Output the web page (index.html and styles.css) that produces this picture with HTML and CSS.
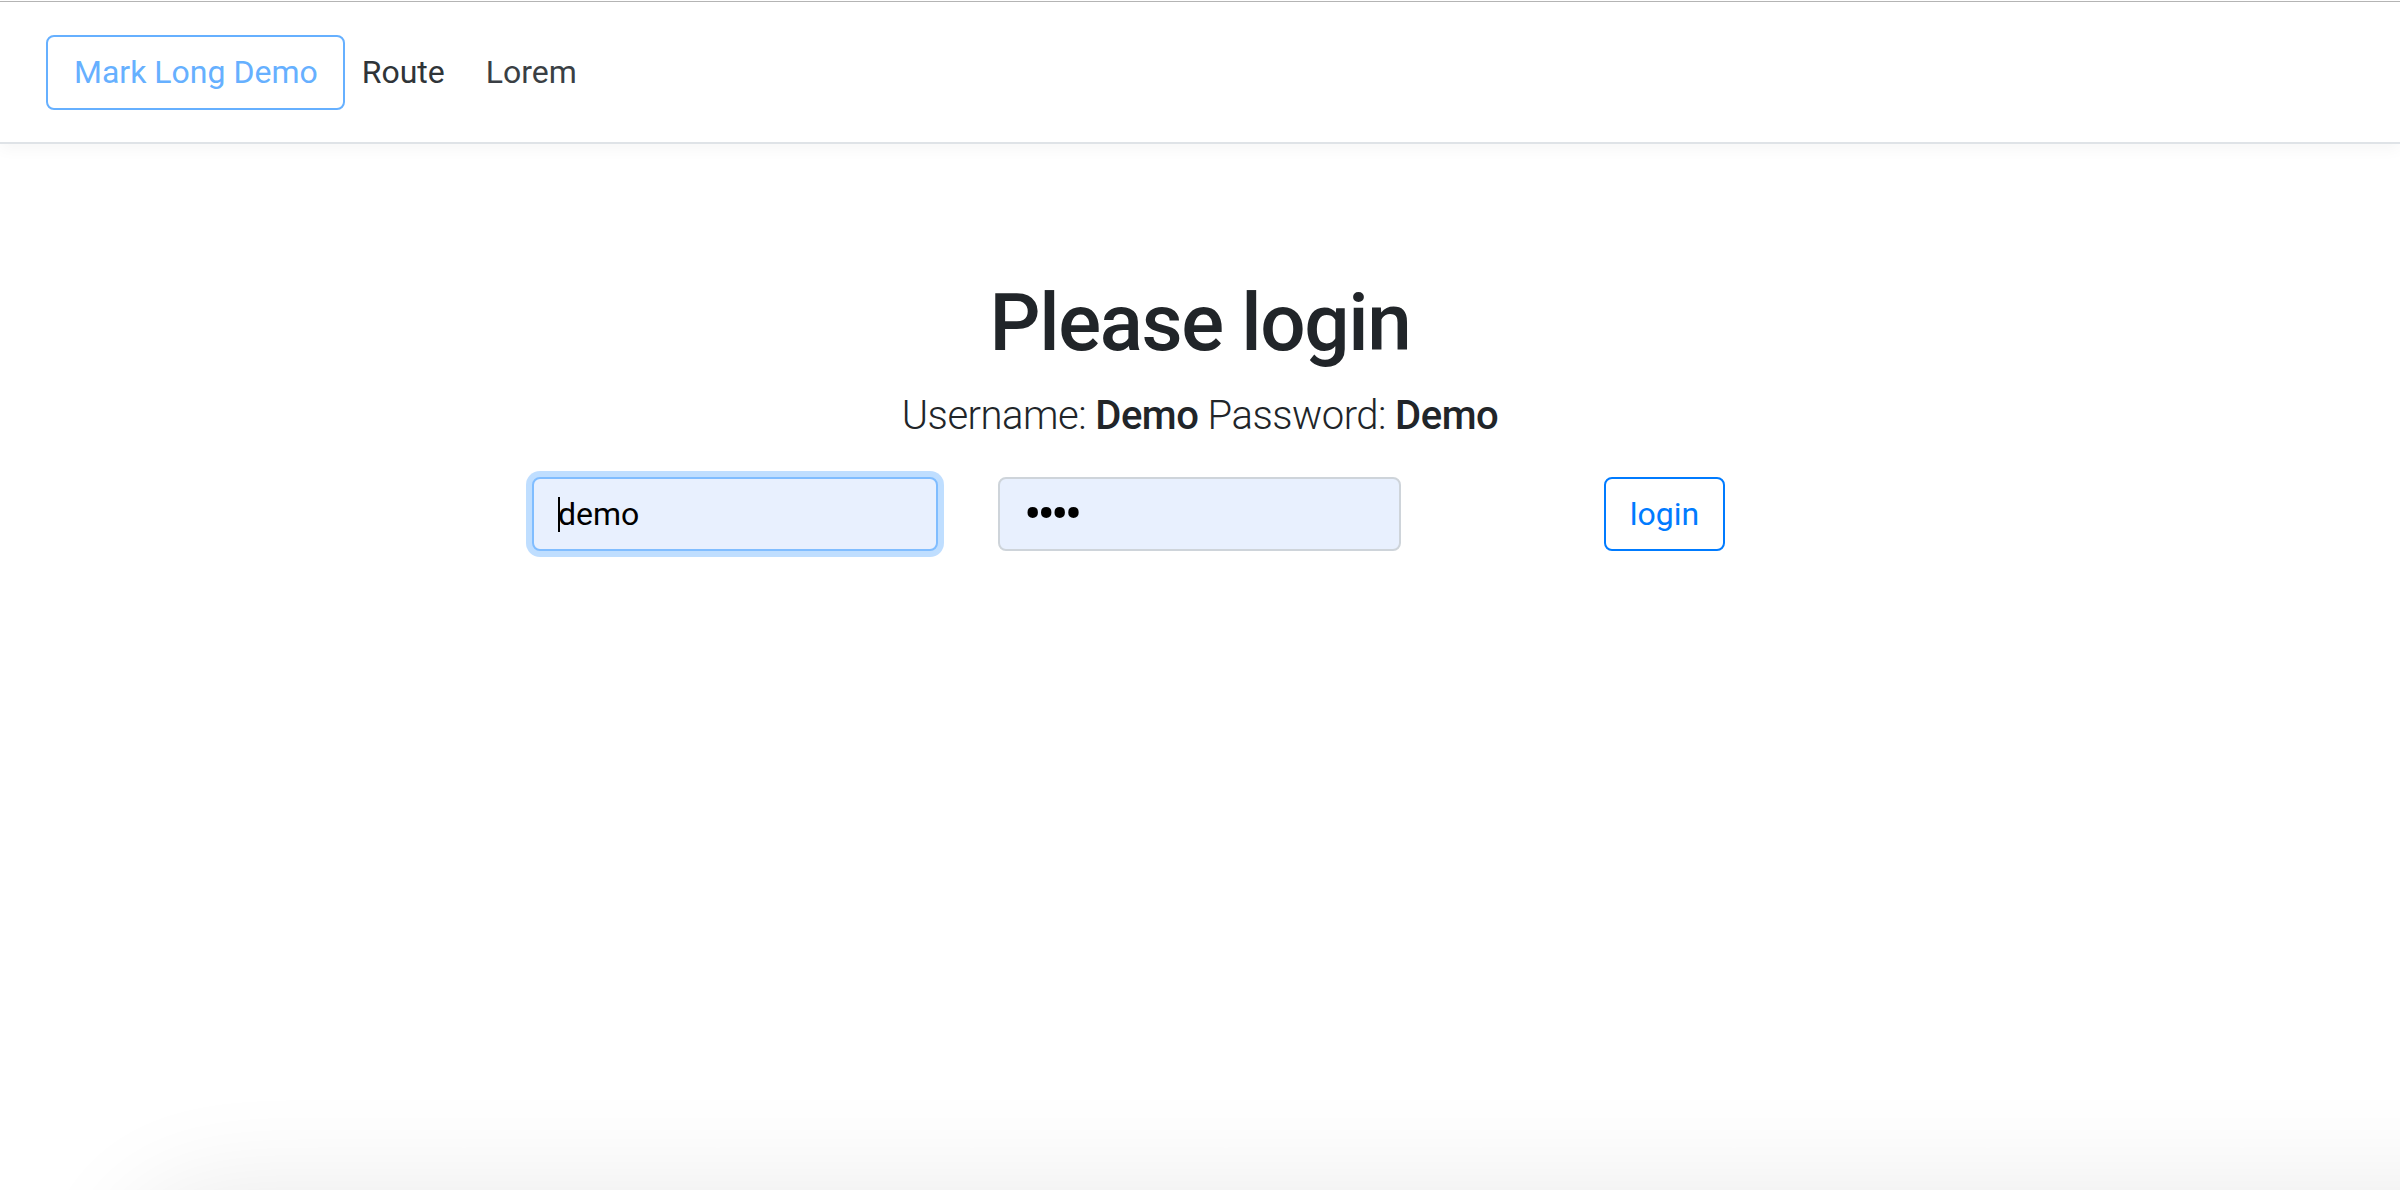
FILE: index.html
```html
<!DOCTYPE html>
<html lang="en">
<head>
<meta charset="utf-8">
<title>Mark Long Demo</title>
<link rel="stylesheet" href="styles.css">
</head>
<body>
<nav class="navbar">
  <a class="brand" href="#">Mark Long Demo</a>
  <a class="nav-link route" href="#">Route</a>
  <a class="nav-link lorem" href="#">Lorem</a>
</nav>
<main class="main">
  <h1 class="title">Please login</h1>
  <p class="lead">Username: <strong>Demo</strong> Password: <strong>Demo</strong></p>
  <form class="login-form">
    <div class="field field-user">
      <input class="input input-focus" type="text" value="demo">
      <span class="caret"></span>
    </div>
    <div class="field field-pass">
      <input class="input input-pass" type="password" value="demo">
    </div>
    <button class="btn-login" type="button">login</button>
  </form>
</main>
<div class="window-shadow"></div>
</body>
</html>
```

FILE: styles.css
```css
html, body {
  margin: 0;
  padding: 0;
  background: #ffffff;
}

body {
  padding-top: 1px;
  font-family: Roboto, "Noto Sans", sans-serif;
  color: #212529;
  overflow: hidden;
  height: 1189px;
}

.navbar {
  box-sizing: border-box;
  height: 143px;
  border-top: 1px solid #b4b4b4;
  border-bottom: 2px solid #dfe3e7;
  display: flex;
  align-items: center;
  padding-left: 46px;
  box-shadow: 0 6px 14px rgba(0, 0, 0, 0.035);
  position: relative;
  z-index: 1;
}

.brand {
  box-sizing: border-box;
  height: 75px;
  padding: 0 25px 0 26px;
  border: 2px solid #66b0ff;
  border-radius: 8px;
  color: #66b0ff;
  font-size: 32px;
  display: flex;
  align-items: center;
  text-decoration: none;
}

.nav-link {
  font-size: 32px;
  color: #2f3438;
  text-decoration: none;
}

.route {
  margin-left: 17px;
}

.lorem {
  margin-left: 41px;
  color: #3a3f44;
}

.main {
  text-align: center;
}

.title {
  margin: 131px 0 0;
  font-size: 80px;
  line-height: 96px;
  font-weight: 500;
  letter-spacing: -0.017em;
  color: #212529;
}

.lead {
  margin: 15px 0 0;
  font-size: 40px;
  line-height: 60px;
  font-weight: 300;
  letter-spacing: -0.5px;
  color: #212529;
}

.lead strong {
  font-weight: 500;
}

.login-form {
  width: 1336px;
  margin: 31px auto 0;
  display: flex;
  align-items: center;
}

.field {
  position: relative;
}

.field-pass {
  margin-left: 60px;
}

.input {
  box-sizing: border-box;
  height: 74px;
  padding: 0 24px;
  border: 2px solid #ced4da;
  border-radius: 8px;
  background: #e8f0fe;
  font-family: Roboto, "Noto Sans", sans-serif;
  font-size: 32px;
  color: #000000;
  outline: none;
  display: block;
}

.field-user .input {
  width: 406px;
}

.field-pass .input {
  width: 403px;
}

.input-pass {
  font-size: 52px;
  letter-spacing: -4px;
}

.input-focus {
  border-color: #80bdff;
  box-shadow: 0 0 0 6px rgba(0, 123, 255, 0.25);
}

.caret {
  position: absolute;
  left: 26px;
  top: 20px;
  width: 2px;
  height: 35px;
  background: #000000;
}

.btn-login {
  box-sizing: border-box;
  margin-left: 203px;
  width: 121px;
  height: 74px;
  border: 2px solid #007bff;
  border-radius: 8px;
  background: #ffffff;
  color: #007bff;
  font-family: Roboto, "Noto Sans", sans-serif;
  font-size: 32px;
  padding: 0;
}

.window-shadow {
  position: fixed;
  left: 160px;
  right: -200px;
  top: 1230px;
  height: 200px;
  border-radius: 60px;
  box-shadow: 0 0 110px 40px rgba(0, 0, 0, 0.09);
}
```
